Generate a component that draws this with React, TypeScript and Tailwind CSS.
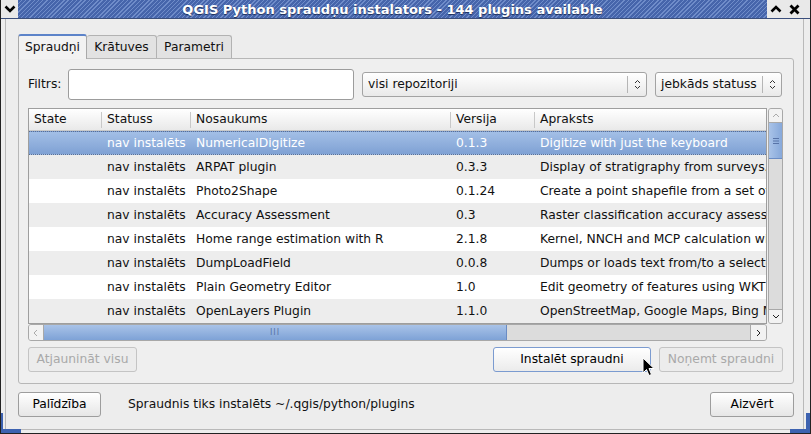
import React from "react"

const rows = [
  { name: "NumericalDigitize", ver: "0.1.3", desc: "Digitize with just the keyboard" },
  { name: "ARPAT plugin", ver: "0.3.3", desc: "Display of stratigraphy from surveys." },
  { name: "Photo2Shape", ver: "0.1.24", desc: "Create a point shapefile from a set of geotagged photos" },
  { name: "Accuracy Assessment", ver: "0.3", desc: "Raster classification accuracy assessment" },
  { name: "Home range estimation with R", ver: "2.1.8", desc: "Kernel, NNCH and MCP calculation with R" },
  { name: "DumpLoadField", ver: "0.0.8", desc: "Dumps or loads text from/to a selected field" },
  { name: "Plain Geometry Editor", ver: "1.0", desc: "Edit geometry of features using WKT" },
  { name: "OpenLayers Plugin", ver: "1.1.0", desc: "OpenStreetMap, Google Maps, Bing Maps layers" },
]

const cols: [string, string][] = [
  ["State", "w-[72px]"],
  ["Statuss", "w-[89px]"],
  ["Nosaukums", "w-[260px]"],
  ["Versija", "w-[84px]"],
  ["Apraksts", "flex-1"],
]

function Updown() {
  return (
    <svg width="7" height="11" viewBox="0 0 7 11" className="shrink-0">
      <path d="M1 4 L3.5 1.5 L6 4 M1 7 L3.5 9.5 L6 7" fill="none" stroke="#333" strokeWidth="1" />
    </svg>
  )
}

function Combo({ label, className }: { label: string; className: string }) {
  return (
    <div
      className={`h-[25px] flex items-center rounded-[3px] border border-[#a3a3a3] bg-gradient-to-b from-white to-[#e9e9e9] ${className}`}
    >
      <span className="flex-1 pl-[5px] whitespace-nowrap overflow-hidden">{label}</span>
      <span className="h-[17px] w-px bg-[#b5b5b5]" />
      <span className="w-[18px] flex justify-center">
        <Updown />
      </span>
    </div>
  )
}

function Btn({
  children,
  className = "",
  disabled = false,
  focus = false,
}: {
  children: React.ReactNode
  className?: string
  disabled?: boolean
  focus?: boolean
}) {
  return (
    <div
      className={`h-[25px] flex items-center justify-center rounded-[3px] border ${
        disabled
          ? "border-[#c4c4c4] text-[#a9a9a9] bg-[#ececec]"
          : focus
          ? "border-[#7b9bd0] bg-gradient-to-b from-white to-[#ebebeb] text-black"
          : "border-[#9d9d9d] bg-gradient-to-b from-white to-[#e6e6e6] text-black"
      } ${className}`}
    >
      {children}
    </div>
  )
}

function Arrow({ dir }: { dir: "up" | "down" | "left" | "right" }) {
  const d = {
    up: "M1 5 L4 2 L7 5",
    down: "M1 2 L4 5 L7 2",
    left: "M5 1 L2 4 L5 7",
    right: "M2 1 L5 4 L2 7",
  }[dir]
  return (
    <svg width="8" height="8" viewBox="0 0 8 8">
      <path d={d} fill="none" stroke={dir === "right" || dir === "down" ? "#222" : "#aaa"} strokeWidth="1" />
    </svg>
  )
}

export default function App() {
  return (
    <div
      className="w-[811px] h-[434px] overflow-hidden bg-[#ededed] text-[12.3px] text-[#111] relative flex flex-col border-l border-r border-b border-[#222]"
      style={{ fontFamily: '"DejaVu Sans", "Liberation Sans", sans-serif' }}
    >
      {/* title bar */}
      <div className="h-[19px] flex border-b border-[#3b4f7c] shrink-0">
        <div className="w-[17px] bg-[#e9e9e9] flex items-center justify-center">
          <svg width="12" height="8" viewBox="0 0 12 8">
            <path d="M1.5 1.5 L6 6 L10.5 1.5" fill="none" stroke="#000" strokeWidth="2.6" />
          </svg>
        </div>
        <div className="flex-1 flex items-center justify-center bg-[repeating-linear-gradient(-45deg,#4665ab_0px,#4665ab_2px,#6f8cc9_2px,#6f8cc9_3px)]">
          <span className="text-white font-bold text-[13px] leading-none [text-shadow:0_1px_1px_#1d2c55]">
            QGIS Python spraudņu instalators - 144 plugins available
          </span>
        </div>
        <div className="w-[36px] bg-[#e9e9e9] flex items-center justify-around">
          <svg width="12" height="8" viewBox="0 0 12 8">
            <path d="M1.5 6.5 L6 2 L10.5 6.5" fill="none" stroke="#000" strokeWidth="2.6" />
          </svg>
          <svg width="11" height="11" viewBox="0 0 11 11">
            <path d="M1.5 1.5 L9.5 9.5 M9.5 1.5 L1.5 9.5" fill="none" stroke="#000" strokeWidth="2.8" />
          </svg>
        </div>
        <div className="w-[7px] bg-[#e9e9e9]" />
      </div>

      {/* window frame */}
      <div className="flex-1 flex flex-col ml-[4px] mr-[6px] mb-[3px] border-l border-r border-b border-[#b9b9b9]">
        <div className="flex-1 flex flex-col pl-[12px] pr-[9px] pt-[14px]">
          {/* tabs */}
          <div className="flex items-end h-[25px]">
            <div className="w-[69px] h-[25px] flex items-center justify-center rounded-t-[3px] border border-b-0 border-[#a9a9a9] border-t-[2px] border-t-[#5c83c9] bg-[#f2f2f2] relative z-10 -mb-px">
              Spraudņi
            </div>
            <div className="w-[70px] h-[23px] flex items-center justify-center rounded-t-[3px] border border-b-0 border-l-0 border-[#b2b2b2] bg-[#e2e2e2]">
              Krātuves
            </div>
            <div className="w-[75px] h-[23px] flex items-center justify-center rounded-t-[3px] border border-b-0 border-l-0 border-[#b2b2b2] bg-[#e2e2e2]">
              Parametri
            </div>
          </div>

          <div className="h-[326px] border border-[#b7b7b7] rounded-[3px] rounded-tl-none bg-[#efefef] pl-[9px] pr-[10px] pt-[10px] flex flex-col">
            {/* filter row */}
            <div className="flex items-center h-[31px]">
              <span className="w-[40px]">Filtrs:</span>
              <div className="w-[286px] h-[31px] bg-white border border-[#9c9c9c] rounded-[3px]" />
              <Combo label="visi repozitoriji" className="w-[285px] ml-[8px]" />
              <Combo label="jebkāds statuss" className="w-[127px] ml-[8px]" />
            </div>

            {/* table */}
            <div className="mt-[8px] flex">
              <div className="w-[739px] flex flex-col">
                <div className="h-[216px] border border-[#9e9e9e] bg-white flex flex-col overflow-hidden">
                  <div className="h-[22px] shrink-0 flex items-center bg-gradient-to-b from-white to-[#e9e9e9] border-b border-[#c9c9c9]">
                    {cols.map(([t, w], i) => (
                      <div key={t} className={`${w} h-full flex items-center`}>
                        {i > 0 && <span className="w-px h-[16px] bg-[#c8c8c8]" />}
                        <span className="pl-[5px]">{t}</span>
                      </div>
                    ))}
                  </div>
                  {rows.map((r, i) => (
                    <div
                      key={r.name}
                      className={`h-[24px] shrink-0 flex items-center whitespace-nowrap ${
                        i === 0
                          ? "bg-gradient-to-b from-[#a3bfe6] to-[#7fa1d4] text-white border-y border-dotted border-[#5a6f94]"
                          : i % 2 === 1
                          ? "bg-[#ededed]"
                          : "bg-white"
                      }`}
                    >
                      <span className="w-[72px]" />
                      <span className="w-[89px] pl-[6px]">nav instalēts</span>
                      <span className="w-[260px] pl-[6px]">{r.name}</span>
                      <span className="w-[84px] pl-[6px]">{r.ver}</span>
                      <span className="flex-1 pl-[6px] overflow-hidden">{r.desc}</span>
                    </div>
                  ))}
                </div>
                {/* horizontal scrollbar */}
                <div className="h-[17px] flex border border-[#a8a8a8] rounded-[3px] bg-[#dcdcdc] overflow-hidden">
                  <div className="w-[15px] flex items-center justify-center bg-[#f2f2f2] border-r border-[#a8a8a8]">
                    <Arrow dir="left" />
                  </div>
                  <div className="w-[463px] flex items-center justify-center bg-gradient-to-b from-[#a9c3e8] to-[#7ea2d6] border-r border-[#6a8cc4]">
                    <span className="text-[8px] leading-none text-[#5874a8] tracking-[1px]">III</span>
                  </div>
                  <div className="flex-1" />
                  <div className="w-[16px] flex items-center justify-center bg-[#f2f2f2] border-l border-[#a8a8a8]">
                    <Arrow dir="right" />
                  </div>
                </div>
              </div>
              {/* vertical scrollbar */}
              <div className="w-[16px] h-[216px] ml-px flex flex-col border border-[#a8a8a8] rounded-[3px] bg-[#dcdcdc] overflow-hidden">
                <div className="h-[14px] flex items-center justify-center bg-[#f2f2f2] border-b border-[#a8a8a8]">
                  <Arrow dir="up" />
                </div>
                <div className="h-[36px] flex items-center justify-center bg-gradient-to-r from-[#a9c3e8] to-[#86a8da] border-b border-[#6a8cc4]">
                  <svg width="6" height="8" viewBox="0 0 6 8">
                    <path d="M0 1.5 H6 M0 4 H6 M0 6.5 H6" stroke="#5874a8" strokeWidth="1" />
                  </svg>
                </div>
                <div className="flex-1" />
                <div className="h-[14px] flex items-center justify-center bg-[#f2f2f2] border-t border-[#a8a8a8]">
                  <Arrow dir="down" />
                </div>
              </div>
            </div>

            {/* action buttons */}
            <div className="flex items-center mt-[6px]">
              <Btn disabled className="w-[109px]">Atjaunināt visu</Btn>
              <div className="flex-1" />
              <Btn focus className="w-[158px]">Instalēt spraudni</Btn>
              <Btn disabled className="w-[124px] ml-[8px]">Noņemt spraudni</Btn>
            </div>
          </div>

          {/* bottom row */}
          <div className="flex items-center mt-[8px]">
            <Btn className="w-[83px]">Palīdzība</Btn>
            <span className="ml-[27px]">Spraudnis tiks instalēts ~/.qgis/python/plugins</span>
            <div className="flex-1" />
            <Btn className="w-[84px]">Aizvērt</Btn>
          </div>
        </div>
      </div>

      {/* resize corners */}
      <div className="absolute left-0 bottom-0 w-[20px] h-[4px] bg-[#3d62b0]" />
      <div className="absolute left-0 bottom-0 w-[2px] h-[20px] bg-[#3d62b0]" />
      <div className="absolute right-0 bottom-0 w-[20px] h-[4px] bg-[#3d62b0]" />
      <div className="absolute right-0 bottom-0 w-[4px] h-[20px] bg-[#3d62b0]" />

      {/* mouse pointer */}
      <svg className="absolute left-[641px] top-[357px]" width="14" height="21" viewBox="0 0 14 21">
        <path d="M1 1 L1 16 L4.5 12.5 L7 18.5 L9.5 17.5 L7 11.5 L12 11.5 Z" fill="#000" stroke="#fff" strokeWidth="1" />
      </svg>
    </div>
  )
}
